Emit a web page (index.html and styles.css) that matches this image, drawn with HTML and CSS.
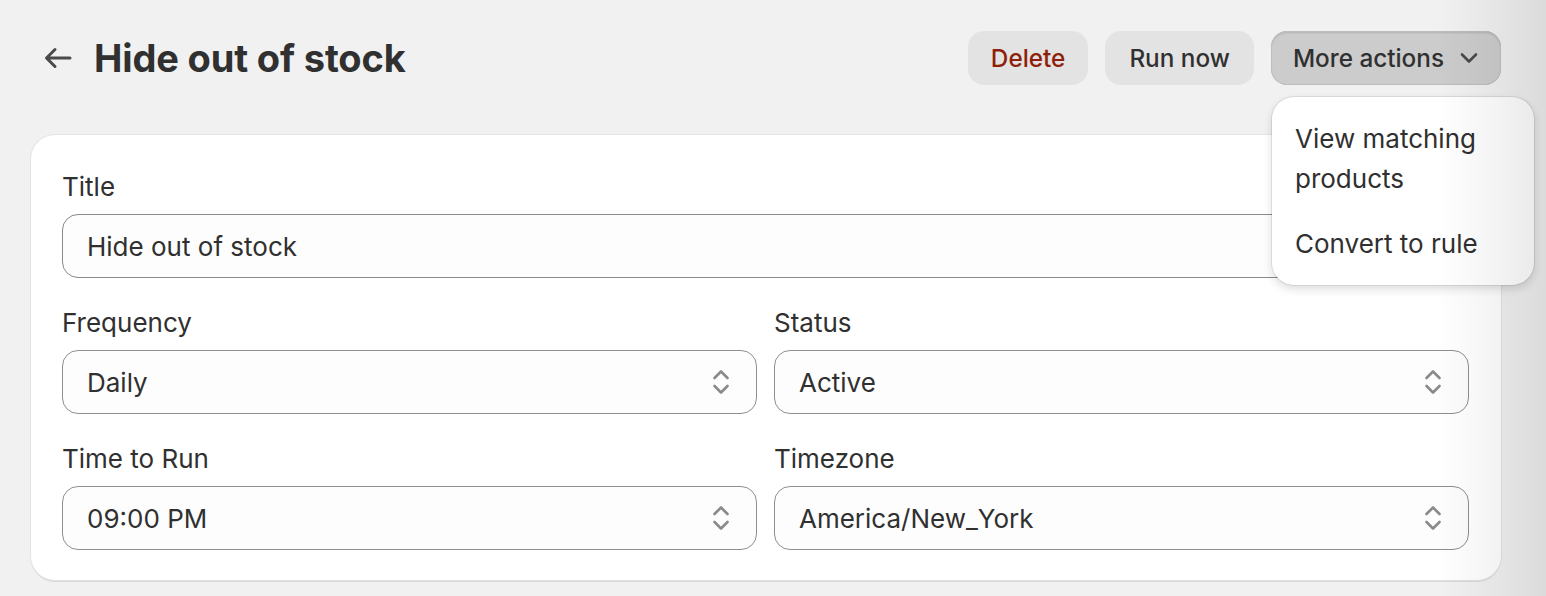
FILE: index.html
```html
<!DOCTYPE html>
<html>
<head>
<meta charset="utf-8">
<link rel="stylesheet" href="styles.css">
</head>
<body>
<div class="page">
  <header class="header">
    <div class="header-left">
      <button class="back" aria-label="Back">
        <svg width="28" height="22" viewBox="0 0 28 22"><path d="M26 11H3M11 2.5L2.5 11L11 19.5" fill="none" stroke="#4a4a4a" stroke-width="3" stroke-linecap="round" stroke-linejoin="round"/></svg>
      </button>
      <h1 class="title">Hide out of stock</h1>
    </div>
    <div class="actions">
      <button class="btn btn-danger">Delete</button>
      <button class="btn">Run now</button>
      <button class="btn btn-pressed">More actions
        <svg class="caret" width="18" height="12" viewBox="0 0 18 12"><path d="M2 2.5L9 9.5L16 2.5" fill="none" stroke="#4a4a4a" stroke-width="2.6" stroke-linecap="round" stroke-linejoin="round"/></svg>
      </button>
    </div>
  </header>

  <section class="card">
    <div class="field">
      <label class="label">Title</label>
      <div class="input">Hide out of stock</div>
    </div>
    <div class="grid">
      <div class="field">
        <label class="label">Frequency</label>
        <div class="input select">Daily<svg class="updown" width="20" height="28" viewBox="0 0 20 28"><path d="M3.5 10L10 3.5L16.5 10M3.5 18L10 24.5L16.5 18" fill="none" stroke="#8a8a8a" stroke-width="2.6" stroke-linecap="round" stroke-linejoin="round"/></svg></div>
      </div>
      <div class="field">
        <label class="label">Status</label>
        <div class="input select">Active<svg class="updown" width="20" height="28" viewBox="0 0 20 28"><path d="M3.5 10L10 3.5L16.5 10M3.5 18L10 24.5L16.5 18" fill="none" stroke="#8a8a8a" stroke-width="2.6" stroke-linecap="round" stroke-linejoin="round"/></svg></div>
      </div>
      <div class="field">
        <label class="label">Time to Run</label>
        <div class="input select">09:00 PM<svg class="updown" width="20" height="28" viewBox="0 0 20 28"><path d="M3.5 10L10 3.5L16.5 10M3.5 18L10 24.5L16.5 18" fill="none" stroke="#8a8a8a" stroke-width="2.6" stroke-linecap="round" stroke-linejoin="round"/></svg></div>
      </div>
      <div class="field">
        <label class="label">Timezone</label>
        <div class="input select">America/New_York<svg class="updown" width="20" height="28" viewBox="0 0 20 28"><path d="M3.5 10L10 3.5L16.5 10M3.5 18L10 24.5L16.5 18" fill="none" stroke="#8a8a8a" stroke-width="2.6" stroke-linecap="round" stroke-linejoin="round"/></svg></div>
      </div>
    </div>
  </section>

  <div class="popover">
    <div class="item">View matching products</div>
    <div class="item">Convert to rule</div>
  </div>
</div>
<div class="edge-shade"></div>
</body>
</html>
```

FILE: styles.css
```css
* { box-sizing: border-box; }
html, body { margin: 0; height: 100%; }
body {
  background: #f1f1f1;
  font-family: Inter, "Noto Sans", sans-serif;
  color: #303030;
  overflow: hidden;
}
.page {
  position: relative;
  width: 1470px;
  margin-left: 31px;
  padding-top: 31px;
}
.header {
  display: flex;
  align-items: center;
  justify-content: space-between;
  height: 54px;
  margin-bottom: 50px;
}
.header-left {
  display: flex;
  align-items: center;
  padding-left: 13px;
  gap: 22px;
}
.back {
  border: 0;
  background: none;
  padding: 0;
  display: flex;
}
.title {
  margin: 0;
  font-size: 38px;
  font-weight: 700;
  letter-spacing: -0.15px;
  color: #303030;
  line-height: 46px;
}
.actions {
  display: flex;
  gap: 17px;
}
.btn {
  height: 54px;
  border: 0;
  border-radius: 16px;
  background: #e3e3e3;
  font-family: inherit;
  font-size: 24.3px;
  font-weight: 500;
  color: #303030;
  padding: 0 24px;
  display: flex;
  align-items: center;
  gap: 16px;
}
.btn-danger { color: #8e1f0b; padding: 0 23px; }
.btn-pressed {
  background: #cccccc;
  box-shadow: inset 0 0 0 1px #bdbdbd, inset 0 2px 2px rgba(0,0,0,0.12);
  padding: 0 23px 0 22px;
}
.card {
  background: #ffffff;
  border-radius: 24px;
  box-shadow: 0 0 0 1px #e3e3e3, 0 2px 0 0 #d8d8d8;
  padding: 32px 32px 30px 31px;
  display: flex;
  flex-direction: column;
  gap: 25px;
}
.field {
  display: flex;
  flex-direction: column;
  gap: 7px;
}
.label {
  font-size: 26px;
  line-height: 40px;
  color: #303030;
}
.input {
  height: 64px;
  border: 1px solid #8a8a8a;
  border-radius: 16px;
  background: #fdfdfd;
  padding: 0 24px;
  display: flex;
  align-items: center;
  font-size: 26px;
  color: #303030;
}
.select {
  justify-content: space-between;
  padding-right: 25px;
  border-color: #8f8f8f;
}
.grid {
  display: grid;
  grid-template-columns: 1fr 1fr;
  column-gap: 17px;
  row-gap: 25px;
}
.popover {
  position: absolute;
  left: 1241px;
  top: 97px;
  width: 262px;
  background: #ffffff;
  border-radius: 22px;
  box-shadow: 0 0 0 1px rgba(0,0,0,0.08), 0 4px 10px rgba(0,0,0,0.14);
  padding: 10px 0 9px;
}
.item {
  padding: 12px 23px;
  font-size: 26px;
  line-height: 40px;
  color: #303030;
}
.item + .item { padding-top: 13px; }
.edge-shade {
  position: fixed;
  top: 0;
  right: 0;
  width: 110px;
  height: 100%;
  pointer-events: none;
  background: linear-gradient(to right, rgba(0,0,0,0) 0%, rgba(0,0,0,0.03) 40%, rgba(0,0,0,0.09) 100%);
}
```
